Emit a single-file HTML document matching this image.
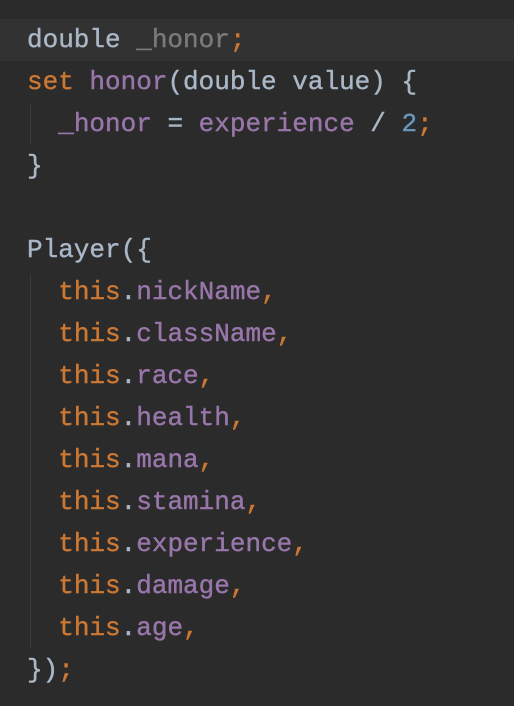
<!DOCTYPE html>
<html><head><style>
html,body{margin:0;padding:0;background:#2b2b2b;width:514px;height:706px;overflow:hidden}
.c{position:absolute;left:27px;top:19px;font-family:"Liberation Mono",monospace;font-size:26px;line-height:42px;color:#a9b7c6;white-space:pre;-webkit-text-stroke:0.4px currentColor}
.hl{position:absolute;left:0;top:19px;width:514px;height:42px;background:#323232}
.k{color:#cc7832}.p{color:#9876aa}.n{color:#6897bb}.g{color:#7a7a7a}
.gd{position:absolute;left:30px;width:1px;background:#3b3b3b}
</style></head><body>
<div class="hl"></div>
<div class="gd" style="top:103px;height:41px"></div>
<div class="gd" style="top:274px;height:375px"></div>
<div class="c">double <span class="g">_honor</span><span class="k">;</span>
<span class="k">set</span> <span class="p">honor</span>(double value) {
  <span class="p">_honor</span> = <span class="p">experience</span> / <span class="n">2</span><span class="k">;</span>
}

Player({
  <span class="k">this</span>.<span class="p">nickName</span><span class="k">,</span>
  <span class="k">this</span>.<span class="p">className</span><span class="k">,</span>
  <span class="k">this</span>.<span class="p">race</span><span class="k">,</span>
  <span class="k">this</span>.<span class="p">health</span><span class="k">,</span>
  <span class="k">this</span>.<span class="p">mana</span><span class="k">,</span>
  <span class="k">this</span>.<span class="p">stamina</span><span class="k">,</span>
  <span class="k">this</span>.<span class="p">experience</span><span class="k">,</span>
  <span class="k">this</span>.<span class="p">damage</span><span class="k">,</span>
  <span class="k">this</span>.<span class="p">age</span><span class="k">,</span>
})<span class="k">;</span></div>
</body></html>
